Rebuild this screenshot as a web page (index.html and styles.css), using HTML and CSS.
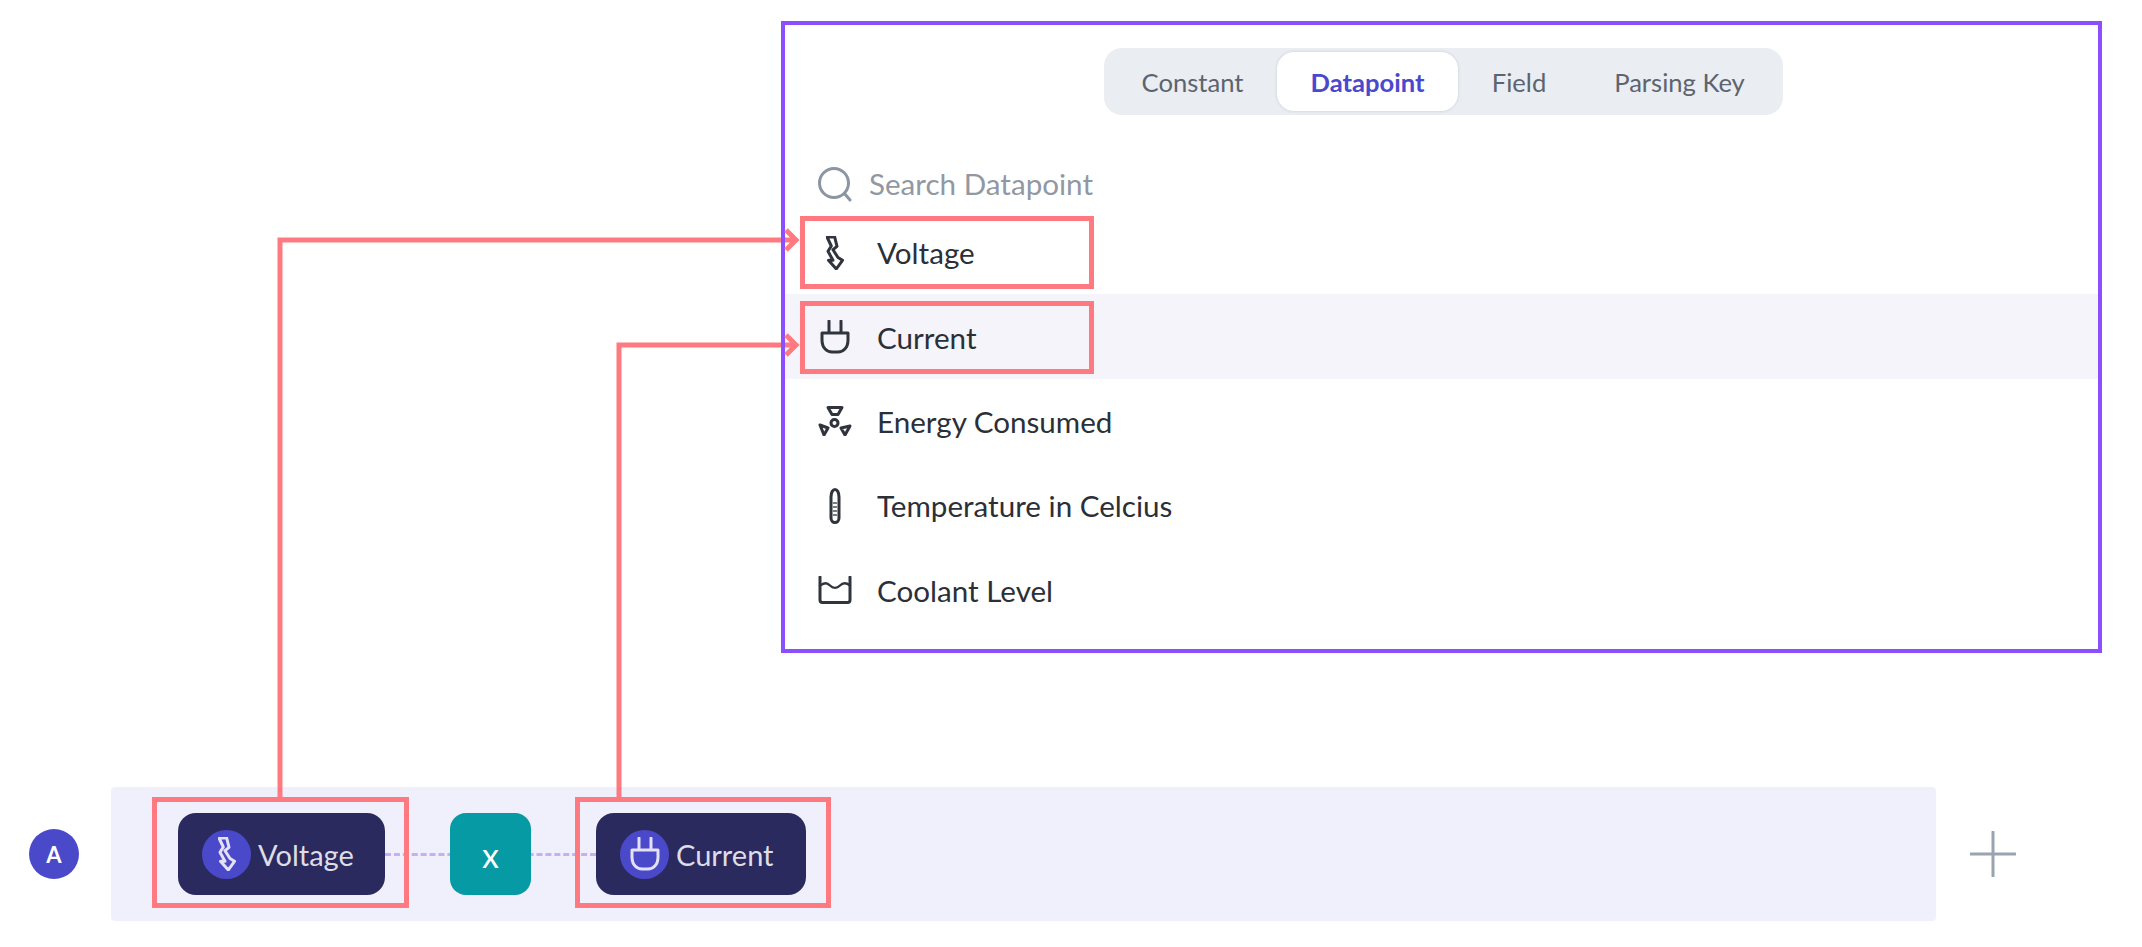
FILE: index.html
```html
<!DOCTYPE html>
<html lang="en">
<head>
<meta charset="utf-8">
<title>Datapoint picker</title>
<link rel="stylesheet" href="styles.css">
</head>
<body>
<div class="page">
  <section class="panel">
    <nav class="tabs">
      <span class="tab tab-constant">Constant</span>
      <span class="tab tab-active">Datapoint</span>
      <span class="tab tab-field">Field</span>
      <span class="tab tab-key">Parsing Key</span>
    </nav>
    <div class="search">
      <span class="slot">
        <svg class="icon" width="36" height="36" viewBox="0 0 36 36"><circle cx="17" cy="17" r="14.5" class="line-grey"/><path d="M27.5 27.5L33 34" class="line-grey"/></svg>
      </span>
      <span class="search-text">Search Datapoint</span>
    </div>
    <ul class="list">
      <li class="row">
        <div class="row-inner framed">
          <span class="slot">
            <svg class="icon" width="18" height="34" viewBox="0 0 18 34"><path d="M1 1H8.7L11 10.3L7 13.7L12 21.5L16.5 24.3L10.3 33L2.5 24.3H7L2 15.3L5.3 10Z" class="line-dark"/></svg>
          </span>
          <span class="label">Voltage</span>
        </div>
      </li>
      <li class="row row-hover">
        <div class="row-inner framed">
          <span class="slot">
            <svg class="icon" width="30" height="34" viewBox="0 0 30 34"><path d="M9 1V13M21 1V13M2 13H28V20C28 28 23 32 18 32H12C7 32 2 28 2 20Z" class="line-dark"/></svg>
          </span>
          <span class="label">Current</span>
        </div>
      </li>
      <li class="row">
        <div class="row-inner">
          <span class="slot">
            <svg class="icon" width="34" height="30" viewBox="0 0 34 30"><circle cx="16.5" cy="17" r="3.5" class="line-dark"/><path d="M10 1.5H24L20 8.5H14Z" class="line-dark"/><path d="M2 19L10 22L6 29Z" class="line-dark"/><path d="M23 22L32 20L27 29Z" class="line-dark"/></svg>
          </span>
          <span class="label">Energy Consumed</span>
        </div>
      </li>
      <li class="row">
        <div class="row-inner">
          <span class="slot">
            <svg class="icon" width="12" height="36" viewBox="0 0 12 36"><path d="M2 9C2 4 4 1.5 6 1.5C8 1.5 10 4 10 9V30C10 33 8 34.5 6 34.5C4 34.5 2 33 2 30Z" class="line-dark"/><path d="M4.5 15H7.5M4.5 19H7.5M4.5 23H7.5M4.5 27H7.5" class="line-tick"/></svg>
          </span>
          <span class="label">Temperature in Celcius</span>
        </div>
      </li>
      <li class="row">
        <div class="row-inner">
          <span class="slot">
            <svg class="icon" width="34" height="28" viewBox="0 0 34 28"><path d="M2 1V24C2 25.5 3 26.5 4.5 26.5H29.5C31 26.5 32 25.5 32 24V1" class="line-dark"/><path d="M2 9.5C7 6.5 9 6.5 12 9.5C15 12.5 19 12.5 22 9.5C25 6.5 28 6.5 32 9.5" class="line-thin"/></svg>
          </span>
          <span class="label">Coolant Level</span>
        </div>
      </li>
    </ul>
  </section>

  <section class="formula">
    <span class="badge">A</span>
    <div class="band">
      <span class="dashes"></span>
      <div class="frame frame-voltage">
        <div class="chip">
          <span class="chip-icon">
            <svg width="18" height="34" viewBox="0 0 18 34"><path d="M1 1H8.7L11 10.3L7 13.7L12 21.5L16.5 24.3L10.3 33L2.5 24.3H7L2 15.3L5.3 10Z" class="line-light"/></svg>
          </span>
          <span class="chip-text">Voltage</span>
        </div>
      </div>
      <div class="op">x</div>
      <div class="frame frame-current">
        <div class="chip">
          <span class="chip-icon">
            <svg width="30" height="34" viewBox="0 0 30 34"><path d="M9 1V13M21 1V13M2 13H28V20C28 28 23 32 18 32H12C7 32 2 28 2 20Z" class="line-light"/></svg>
          </span>
          <span class="chip-text">Current</span>
        </div>
      </div>
    </div>
    <svg class="plus" width="46" height="46" viewBox="0 0 46 46"><path d="M23 1V45M1 23H45"/></svg>
  </section>

  <svg class="connectors" width="2142" height="947" viewBox="0 0 2142 947">
    <path d="M280 798V240H781M785 240H795M786 230L796 240L786 250"/>
    <path d="M619 798V345H781M785 345H795M786 335L796 345L786 355"/>
  </svg>
</div>
</body>
</html>
```

FILE: styles.css
```css
* { box-sizing: border-box; }

html, body { margin: 0; padding: 0; background: #fff; }

body {
  font-family: "Lato", "Liberation Sans", sans-serif;
  color: #2b2f38;
}

.page {
  position: relative;
  width: 2142px;
  height: 947px;
  overflow: hidden;
  padding-top: 21px;
}

.panel {
  width: 1321px;
  height: 632px;
  margin-left: 781px;
  border: 4px solid #8b4fff;
}

.tabs {
  display: flex;
  align-items: center;
  width: 679px;
  height: 67px;
  margin: 23px 0 0 319px;
  padding: 0 4px;
  background: #eaedf1;
  border-radius: 18px;
  font-size: 25.6px;
  color: #5c6470;
}

.tab {
  display: flex;
  align-items: center;
  justify-content: center;
  height: 59px;
}

.tab-constant { width: 169px; }
.tab-field { width: 122px; }
.tab-key { flex: 1; }

.tab-active {
  width: 181px;
  background: #fff;
  border-radius: 17px;
  color: #4a48cc;
  font-weight: 700;
  box-shadow: 0 0 3px rgba(120, 130, 150, 0.3);
}

.search {
  display: flex;
  align-items: center;
  height: 40px;
  margin: 49px 0 6px;
  padding-left: 32px;
}

.search-text {
  margin: 0 0 2px 16px;
  font-size: 29.6px;
  color: #9198a3;
}

.slot {
  display: flex;
  align-items: center;
  justify-content: center;
  flex: none;
  width: 36px;
}

.icon { display: block; }

.list { margin: 0; padding: 0; list-style: none; }

.row {
  display: flex;
  align-items: center;
  height: 84.4px;
  padding-left: 15px;
}

.row-hover { background: #f4f4fa; }

.row-inner {
  display: flex;
  align-items: center;
  width: 294px;
  height: 73px;
  margin-top: 1px;
  padding-left: 12px;
  border: 5px solid transparent;
  white-space: nowrap;
}

.framed { border-color: #ff7a80; }

.label {
  margin-left: 24px;
  font-size: 29.6px;
  color: #2b2f38;
}

.line-grey, .line-dark, .line-thin, .line-tick, .line-light {
  fill: none;
  stroke-linejoin: round;
  stroke-linecap: round;
}

.line-grey { stroke: #8b95a3; stroke-width: 3; }
.line-dark { stroke: #30343c; stroke-width: 3; }
.line-thin { stroke: #30343c; stroke-width: 2.4; }
.line-tick { stroke: #4a4e56; stroke-width: 1.6; }
.line-light { stroke: #e4e0f6; stroke-width: 3; }

.formula {
  display: flex;
  align-items: center;
  height: 134px;
  margin-top: 134px;
  padding-left: 29px;
}

.badge {
  display: flex;
  align-items: center;
  justify-content: center;
  flex: none;
  width: 50px;
  height: 50px;
  border-radius: 50%;
  background: #4a49c9;
  color: #fff;
  font-size: 22px;
  font-weight: 700;
}

.band {
  position: relative;
  display: flex;
  align-items: flex-start;
  width: 1825px;
  height: 134px;
  margin-left: 32px;
  padding: 10px 0 0 41px;
  background: #f0f0fc;
  border-radius: 4px;
}

.dashes {
  position: absolute;
  left: 274px;
  top: 66px;
  width: 211px;
  border-top: 3px dashed #c6b0f2;
}

.frame {
  position: relative;
  height: 111px;
  padding-top: 11px;
  border: 5px solid #ff7a80;
}

.frame-voltage { width: 257px; padding-left: 21px; }
.frame-current { width: 256px; margin-left: 44px; padding-left: 16px; }

.chip {
  display: flex;
  align-items: center;
  height: 82px;
  padding-left: 24px;
  background: #2b2a5e;
  border-radius: 18px;
}

.frame-voltage .chip { width: 207px; }
.frame-current .chip { width: 210px; }

.chip-icon {
  display: flex;
  align-items: center;
  justify-content: center;
  flex: none;
  width: 49px;
  height: 49px;
  border-radius: 50%;
  background: #4a49c9;
}

.chip-text {
  margin-left: 7px;
  font-size: 29px;
  color: #dedde6;
}

.op {
  position: relative;
  display: flex;
  align-items: center;
  justify-content: center;
  flex: none;
  width: 81px;
  height: 82px;
  margin: 16px 0 0 41px;
  background: #069aa5;
  border-radius: 16px;
  color: #fff;
  font-size: 34px;
  font-weight: 400;
}

.plus { margin-left: 34px; flex: none; }
.plus path { fill: none; stroke: #9aa3b0; stroke-width: 3; stroke-linecap: round; }

.connectors {
  position: absolute;
  left: 0;
  top: 0;
  pointer-events: none;
}

.connectors path {
  fill: none;
  stroke: #ff7a80;
  stroke-width: 5;
}
```
